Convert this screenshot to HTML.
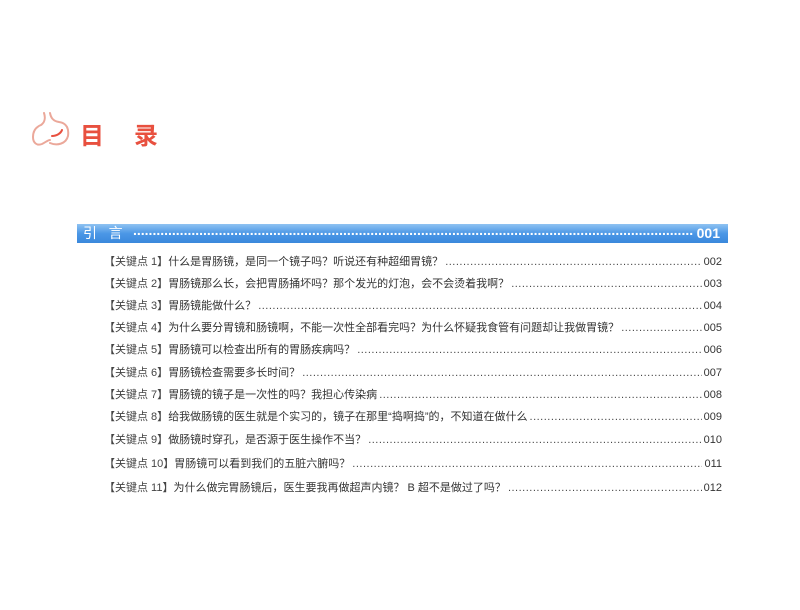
<!DOCTYPE html>
<html><head><meta charset="utf-8"><style>
body{margin:0;width:800px;height:610px;background:#fff;position:relative;font-family:"Liberation Sans","Noto Sans CJK SC",sans-serif;overflow:hidden}
.t{position:absolute;top:116px;font-size:24px;font-weight:bold;color:#e8503f}
.bar{position:absolute;left:77px;top:224px;width:651px;height:19px;background:linear-gradient(#8fc3f2,#4b97e6 50%,#3a88dc);color:#fff;font-size:14px;line-height:19px}
.bar .a{position:absolute;left:6px;top:0}
.bar .d{position:absolute;left:56px;right:34px;top:-3px;overflow:hidden;white-space:nowrap;font-weight:bold;letter-spacing:0}
.bar .n{position:absolute;right:8px;top:0;font-weight:bold}
.r{position:absolute;left:104px;width:618px;height:16px;font-size:11px;color:#333;line-height:16px;display:flex;white-space:nowrap}
.r .k{color:#444}
.r .d{flex:1;overflow:hidden;margin:0 2px;color:#444;letter-spacing:0.5px}
</style></head><body>
<svg style="position:absolute;left:30px;top:110px" width="44" height="42" viewBox="0 0 44 42" fill="none" stroke="#eba89a" stroke-width="2" stroke-linecap="round">
<path d="M14 3 C16 9 14 13 11 15 C6 17 3 21 3 27 C3 33 7 36 12 34 C16 32 18 30 20 30"/>
<path d="M20 3 C21 8 23 11 29 12 C37 13 39 19 38 26 C36 34 27 36 20 33"/>
<path d="M22 26 C27 26 31 23 32 20" stroke="#e8503f"/>
</svg>
<div class="t" style="left:80px">目</div>
<div class="t" style="left:134px">录</div>
<div class="bar"><span class="a">引&nbsp;&nbsp;&nbsp;言</span><span class="d">..................................................................................................................................................................................................................................</span><span class="n">001</span></div>
<div class="r" style="top:254px"><span><span class="k">【关键点 1】</span>什么是胃肠镜，是同一个镜子吗？听说还有种超细胃镜？</span><span class="d">................................................................................................................................................................</span><span>002</span></div>
<div class="r" style="top:276px"><span><span class="k">【关键点 2】</span>胃肠镜那么长，会把胃肠捅坏吗？那个发光的灯泡，会不会烫着我啊？</span><span class="d">................................................................................................................................................................</span><span>003</span></div>
<div class="r" style="top:298px"><span><span class="k">【关键点 3】</span>胃肠镜能做什么？</span><span class="d">................................................................................................................................................................................................................................................</span><span>004</span></div>
<div class="r" style="top:320px"><span><span class="k">【关键点 4】</span>为什么要分胃镜和肠镜啊，不能一次性全部看完吗？为什么怀疑我食管有问题却让我做胃镜？</span><span class="d">................................................................................................................</span><span>005</span></div>
<div class="r" style="top:342px"><span><span class="k">【关键点 5】</span>胃肠镜可以检查出所有的胃肠疾病吗？</span><span class="d">................................................................................................................................................................................................</span><span>006</span></div>
<div class="r" style="top:365px"><span><span class="k">【关键点 6】</span>胃肠镜检查需要多长时间？</span><span class="d">................................................................................................................................................................................................................................</span><span>007</span></div>
<div class="r" style="top:387px"><span><span class="k">【关键点 7】</span>胃肠镜的镜子是一次性的吗？我担心传染病</span><span class="d">................................................................................................................................................................................................</span><span>008</span></div>
<div class="r" style="top:409px"><span><span class="k">【关键点 8】</span>给我做肠镜的医生就是个实习的，镜子在那里“捣啊捣”的，不知道在做什么</span><span class="d">................................................................................................................................</span><span>009</span></div>
<div class="r" style="top:432px"><span><span class="k">【关键点 9】</span>做肠镜时穿孔，是否源于医生操作不当？</span><span class="d">................................................................................................................................................................................................</span><span>010</span></div>
<div class="r" style="top:456px"><span><span class="k">【关键点 10】</span>胃肠镜可以看到我们的五脏六腑吗？</span><span class="d">................................................................................................................................................................................................</span><span>011</span></div>
<div class="r" style="top:480px"><span><span class="k">【关键点 11】</span>为什么做完胃肠镜后，医生要我再做超声内镜？ B 超不是做过了吗？</span><span class="d">................................................................................................................................</span><span>012</span></div>
</body></html>
